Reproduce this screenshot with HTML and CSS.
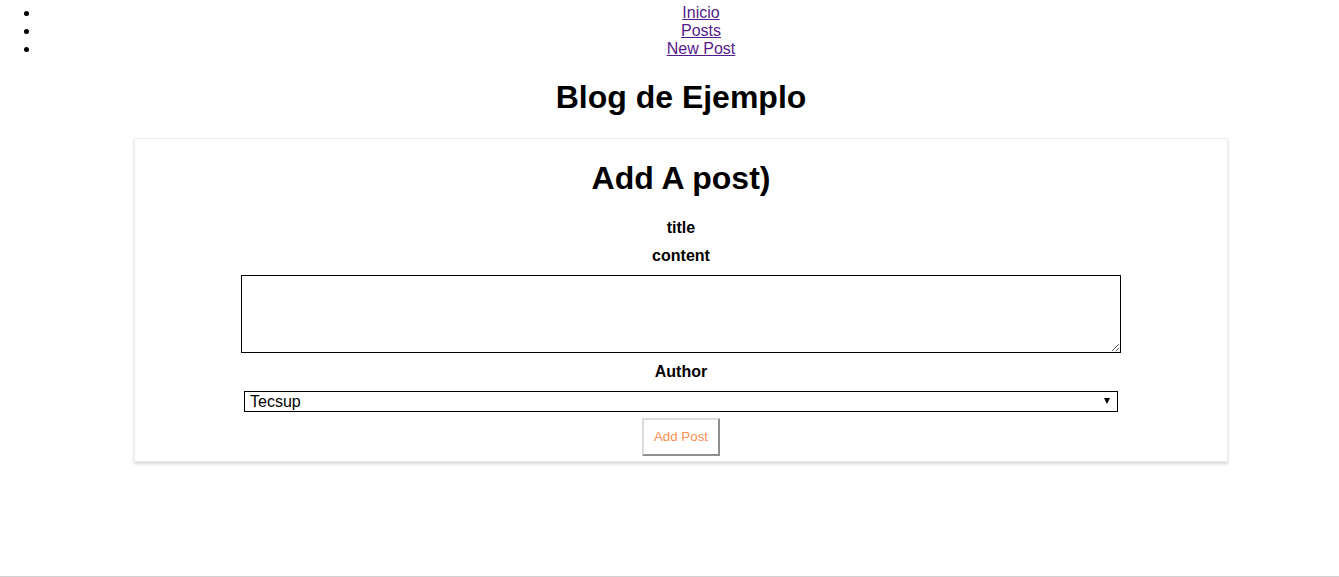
FILE: index.html
```html
<!DOCTYPE html>
<html lang="es">
<head>
<meta charset="utf-8">
<title>Blog de Ejemplo</title>
<link rel="stylesheet" href="styles.css">
</head>
<body>
<div class="page">
  <ul class="nav">
    <li><a href="#">Inicio</a></li>
    <li><a href="#">Posts</a></li>
    <li><a href="#">New Post</a></li>
  </ul>
  <h1 class="site-title">Blog de Ejemplo</h1>
  <div class="card">
    <h1 class="card-title">Add A post)</h1>
    <form class="post-form">
      <label class="field-label">title</label>
      <label class="field-label label-content">content</label>
      <textarea class="content-input"></textarea>
      <label class="field-label label-author">Author</label>
      <div class="select-wrap">
        <select class="author-select">
          <option>Tecsup</option>
        </select>
      </div>
      <button type="button" class="submit-btn">Add Post</button>
    </form>
  </div>
</div>
</body>
</html>
```

FILE: styles.css
```css
html {
  overflow: hidden;
}
body {
  margin: 0;
  font-family: "Liberation Sans", Arial, sans-serif;
  color: #000;
  background: #fff;
}
.page {
  width: 1362px;
  min-height: 576px;
  border-bottom: 1px solid #d2d2d2;
  box-sizing: content-box;
  text-align: center;
}
.nav {
  margin: 0;
  padding: 4px 0 0 40px;
  font-size: 16px;
  line-height: 18px;
}
.nav a {
  color: #551a8b;
}
.site-title {
  font-size: 32px;
  line-height: 37px;
  margin: 21px 0 22px;
}
.card {
  margin: 0 134px;
  border: 1px solid #ececec;
  box-shadow: 0 2px 3px rgba(0, 0, 0, 0.16);
  padding-bottom: 5px;
}
.card-title {
  font-size: 32px;
  line-height: 37px;
  margin: 21px 0 22px;
}
.post-form {
  display: flex;
  flex-direction: column;
  align-items: center;
}
.field-label {
  display: block;
  font-weight: bold;
  font-size: 16px;
  line-height: 18px;
}
.label-content {
  margin-top: 10px;
}
.content-input {
  margin-top: 10px;
  width: 880px;
  height: 78px;
  box-sizing: border-box;
  border: 1px solid #000;
  resize: both;
  padding: 2px;
}
.label-author {
  margin-top: 10px;
}
.select-wrap {
  position: relative;
  margin-top: 10px;
  width: 874px;
  height: 21px;
}
.select-wrap::after {
  content: "";
  position: absolute;
  right: 8px;
  top: 7px;
  border-left: 3.5px solid transparent;
  border-right: 3.5px solid transparent;
  border-top: 6px solid #000;
  pointer-events: none;
}
.author-select {
  display: block;
  width: 100%;
  height: 100%;
  box-sizing: border-box;
  border: 1px solid #000;
  border-radius: 0;
  -webkit-appearance: none;
  appearance: none;
  background: #fff;
  font-family: "Liberation Sans", Arial, sans-serif;
  font-size: 16px;
  line-height: 19px;
  color: #000;
  padding: 0 0 0 5px;
  margin: 0;
}
.submit-btn {
  margin-top: 6px;
  background: #fff;
  border: 2px solid;
  border-color: #dcdcdc #8f8f8f #8f8f8f #dcdcdc;
  font-family: "Liberation Sans", Arial, sans-serif;
  font-size: 13.33px;
  line-height: 15px;
  color: #fb8e55;
  padding: 9px 10px 10px;
}
```
